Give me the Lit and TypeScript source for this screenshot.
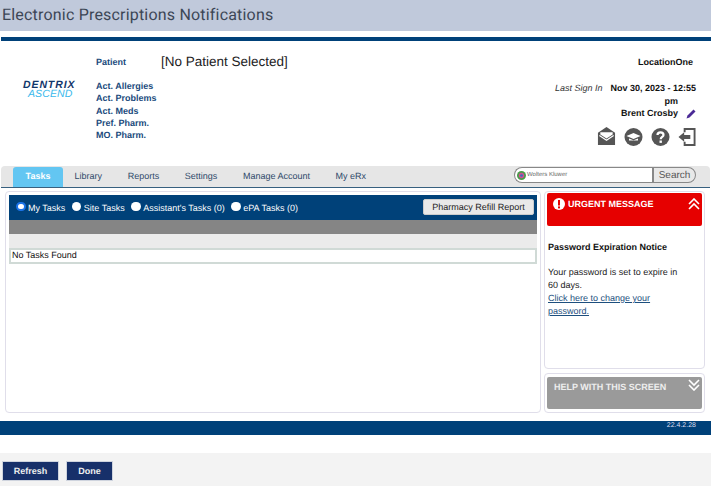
import { LitElement, html, css, svg } from "lit";
import { customElement } from "lit/decorators.js";

@customElement("app-root")
export class AppRoot extends LitElement {
  static styles = css`
    :host { display: block; width: 711px; height: 486px; overflow: hidden; background: #fff; font-family: "Liberation Sans", Arial, sans-serif; font-size: 9px; color: #111; text-rendering: geometricPrecision; }
    * { box-sizing: border-box; }
    .title { height: 31px; background: #c0c9db; color: #3c4656; font-family: Roboto, sans-serif; font-size: 16px; line-height: 29px; padding-left: 2px; letter-spacing: 0.19px; }
    .rule { height: 4px; margin: 6px 0 0 1px; background: #004179; }
    .head { height: 125px; display: flex; }
    .logo { width: 96px; padding: 40px 0 0 23px; font-style: italic; line-height: 9px; white-space: nowrap; }
    .logo b { display: block; color: #12376b; font-weight: 700; font-size: 10.5px; letter-spacing: 0.9px; }
    .logo span { display: block; color: #3ab9ec; font-size: 10.5px; padding-left: 5px; letter-spacing: 0.1px; }
    .pat { flex: 1; padding-top: 10px; }
    .pat-row { display: flex; align-items: center; height: 21px; }
    .lbl { color: #1a4a7c; font-weight: 700; font-size: 9px; }
    .pat-row .lbl { width: 65px; }
    .name { font-size: 13.5px; color: #222; }
    .links { margin-top: 8px; display: flex; flex-direction: column; }
    .links .lbl { height: 12.3px; line-height: 12.3px; }
    .right { width: 215px; padding: 16px 15px 0 0; text-align: right; font-weight: 700; font-size: 9px; color: #111; white-space: nowrap; }
    .loc { height: 25px; padding-right: 3px; }
    .sign { display: flex; justify-content: flex-end; line-height: 13px; }
    .sign i { font-weight: 400; color: #333; margin-right: 8px; }
    .sign-pm { line-height: 12px; padding-right: 18px; }
    .user { display: flex; justify-content: flex-end; align-items: center; gap: 8px; line-height: 13px; }
    .icons { display: flex; justify-content: flex-end; gap: 8px; margin-top: 7px; height: 20px; }
    .tabs { height: 22px; margin: 0 1px; background: #e6e6e6; border-bottom: 1.5px solid #37607f; border-radius: 4px 4px 0 0; display: flex; align-items: flex-end; gap: 25.6px; padding-left: 12px; position: relative; }
    .tab { height: 20px; line-height: 18px; color: #2f4a6a; font-size: 9px; white-space: nowrap; }
    .tab.on { width: 50px; background: #63c6f2; color: #fff; font-weight: 700; text-align: center; border-radius: 3px 3px 0 0; margin-right: -14px; }
    .search { position: absolute; right: 14px; top: 1px; display: flex; height: 16px; }
    .sbox { width: 138px; background: #fff; border: 1px solid #888; border-right: 0; border-radius: 9px 0 0 9px; display: flex; align-items: center; gap: 1px; padding-left: 2px; font-size: 6px; color: #666; }
    .sbtn { width: 44px; background: #e8e8e8; border: 1px solid #888; border-left-width: 2px; border-radius: 0 9px 9px 0; text-align: center; line-height: 15px; font-size: 10px; color: #555; }
    .main { display: flex; gap: 3px; padding-left: 5px; height: 230px; margin-top: 3px; }
    .panel { width: 536px; height: 222px; border: 1px solid #e0deea; border-radius: 4px; padding: 3px; }
    .tbar { height: 25px; background: #004179; color: #fff; display: flex; align-items: center; padding-left: 7px; font-size: 9px; position: relative; }
    .radio { display: flex; align-items: center; gap: 2.5px; margin-right: 6.5px; }
    .dot { width: 9.5px; height: 9.5px; border-radius: 50%; background: #fff; margin-top: -2px; }
    .dot.on { border: 2px solid #1a73e8; }
    .prb { position: absolute; right: 3px; top: 4px; width: 111px; height: 16px; background: #e9e9e9; border: 1px solid #ccc; border-radius: 2px; color: #222; font-size: 9px; text-align: center; line-height: 14px; }
    .gray { height: 14px; background: #858585; }
    .light { height: 14px; background: #ebebeb; }
    .none { height: 16px; border: 2px solid #d0dad6; font-size: 9px; line-height: 10px; padding-left: 1px; color: #111; }
    .side { width: 161px; display: flex; flex-direction: column; gap: 4px; }
    .urgent { height: 178px; border: 1px solid #e0deea; border-radius: 4px; padding: 1px 2px 0 2px; }
    .ured { height: 33px; background: #e60000; border-radius: 2px; color: #fff; font-weight: 700; font-size: 9px; display: flex; padding: 5px 0 0 6px; gap: 3px; position: relative; line-height: 12px; }
    .chev { position: absolute; right: 2px; top: 5px; }
    .pne { font-weight: 700; font-size: 9px; color: #111; margin-top: 15px; padding-left: 1px; line-height: 12px; }
    .msg { margin-top: 13px; padding-left: 1px; font-size: 9px; line-height: 13px; color: #222; }
    .msg a { color: #1d4f7e; text-decoration: underline; display: block; width: 115px; }
    .help { height: 40px; border: 1px solid #e0deea; border-radius: 4px; padding: 3px 2px; }
    .hbox { height: 32px; background: #9a9a9a; border-radius: 2px; color: #eee; font-weight: 700; font-size: 9px; padding: 4px 0 0 7px; position: relative; line-height: 12px; }
    .hbox .chev { top: 2px; }
    .foot { height: 14px; background: #004179; color: #dde; text-align: right; font-size: 7px; line-height: 10px; padding-right: 15px; }
    .actions { height: 33px; margin-top: 18px; background: #f3f3f3; display: flex; gap: 7px; padding: 8px 0 0 2px; }
    .btn { height: 20px; background: #17306a; color: #f0f0f0; font-weight: 700; font-size: 9px; text-align: center; line-height: 18px; border: 1px solid #cfd4de; }
    .btn.refresh { width: 57px; }
    .btn.done { width: 47px; }
  `;

  private chev(up: boolean) {
    const t = up ? "M1 6 L6 1 L11 6 M1 11 L6 6 L11 11" : "M1 1 L6 6 L11 1 M1 6 L6 11 L11 6";
    return html`<svg class="chev" width="12" height="12" viewBox="0 0 12 12">${svg`<path d=${t} fill="none" stroke="#fff" stroke-width="1.6"/>`}</svg>`;
  }

  render() {
    const radios = [["My Tasks", true], ["Site Tasks", false], ["Assistant's Tasks (0)", false], ["ePA Tasks (0)", false]] as const;
    const tabs = ["Library", "Reports", "Settings", "Manage Account", "My eRx"];
    return html`
      <div class="title">Electronic Prescriptions Notifications</div>
      <div class="rule"></div>
      <div class="head">
        <div class="logo"><b>DENTRIX</b><span>ASCEND</span></div>
        <div class="pat">
          <div class="pat-row"><span class="lbl">Patient</span><span class="name">[No Patient Selected]</span></div>
          <div class="links">
            ${["Act. Allergies", "Act. Problems", "Act. Meds", "Pref. Pharm.", "MO. Pharm."].map((l) => html`<span class="lbl">${l}</span>`)}
          </div>
        </div>
        <div class="right">
          <div class="loc">LocationOne</div>
          <div class="sign"><i>Last Sign In</i><div>Nov 30, 2023 - 12:55</div></div>
          <div class="sign-pm">pm</div>
          <div class="user"><span>Brent Crosby</span>
            <svg width="10" height="10" viewBox="0 0 10 10"><path d="M0.5 9.5 L1.5 6.5 L7.5 0.5 L9.5 2.5 L3.5 8.5 Z" fill="#4b2a96"/></svg>
          </div>
          <div class="icons">
            <svg width="19" height="19" viewBox="0 0 19 20"><path d="M9.5 0 L18.5 6 V19 H0.5 V6 Z" fill="#555"/><path d="M3 5.5 H16 V8 L9.5 12 L3 8 Z" fill="#fff"/><path d="M2 9 L9.5 14 L17 9" fill="none" stroke="#fff" stroke-width="1.2"/></svg>
            <svg width="19" height="20" viewBox="0 0 19 20"><circle cx="9.5" cy="10" r="9" fill="#555"/><path d="M2.5 9 L9.5 6 L16.5 9 L9.5 12 Z" fill="#fff"/><path d="M5 11.5 L9.5 13.3 L14 11.5 V13.5 H5 Z" fill="#fff"/></svg>
            <svg width="19" height="20" viewBox="0 0 19 20"><circle cx="9.5" cy="10" r="9" fill="#555"/><path d="M6.5 8 C6.5 4.5 12.5 4.5 12.5 8 C12.5 10 9.7 10 9.7 12.2" fill="none" stroke="#fff" stroke-width="2.2"/><rect x="8.5" y="13.5" width="2.4" height="2.4" fill="#fff"/></svg>
            <svg width="18" height="20" viewBox="0 0 19 20"><path d="M7 5 V1.5 H17.5 V18.5 H7 V15" fill="none" stroke="#555" stroke-width="2"/><path d="M0.5 10 L6.5 5 V8 H13 V12 H6.5 V15 Z" fill="#555"/></svg>
          </div>
        </div>
      </div>
      <div class="tabs">
        <div class="tab on">Tasks</div>
        ${tabs.map((t) => html`<div class="tab">${t}</div>`)}
        <div class="search">
          <div class="sbox">
            <svg width="9" height="9" viewBox="0 0 10 10"><circle cx="5" cy="5" r="5" fill="#4a9c4a"/><circle cx="5" cy="5" r="3" fill="#d05090"/><circle cx="5" cy="5" r="1.5" fill="#3a70c0"/></svg>
            <span>Wolters Kluwer</span>
          </div>
          <div class="sbtn">Search</div>
        </div>
      </div>
      <div class="main">
        <div class="panel">
          <div class="tbar">
            ${radios.map(([t, on]) => html`<label class="radio"><span class="dot ${on ? "on" : ""}"></span>${t}</label>`)}
            <div class="prb">Pharmacy Refill Report</div>
          </div>
          <div class="gray"></div>
          <div class="light"></div>
          <div class="none">No Tasks Found</div>
        </div>
        <div class="side">
          <div class="urgent">
            <div class="ured">
              <svg width="12" height="12" viewBox="0 0 12 12"><circle cx="6" cy="6" r="6" fill="#fff"/><rect x="5" y="2" width="2" height="5.5" fill="#e60000"/><rect x="5" y="8.4" width="2" height="2" fill="#e60000"/></svg>
              URGENT MESSAGE${this.chev(true)}
            </div>
            <div class="pne">Password Expiration Notice</div>
            <div class="msg">Your password is set to expire in<br />60 days.<a>Click here to change your password.</a></div>
          </div>
          <div class="help"><div class="hbox">HELP WITH THIS SCREEN${this.chev(false)}</div></div>
        </div>
      </div>
      <div class="foot">22.4.2.28</div>
      <div class="actions">
        <div class="btn refresh">Refresh</div>
        <div class="btn done">Done</div>
      </div>
    `;
  }
}
